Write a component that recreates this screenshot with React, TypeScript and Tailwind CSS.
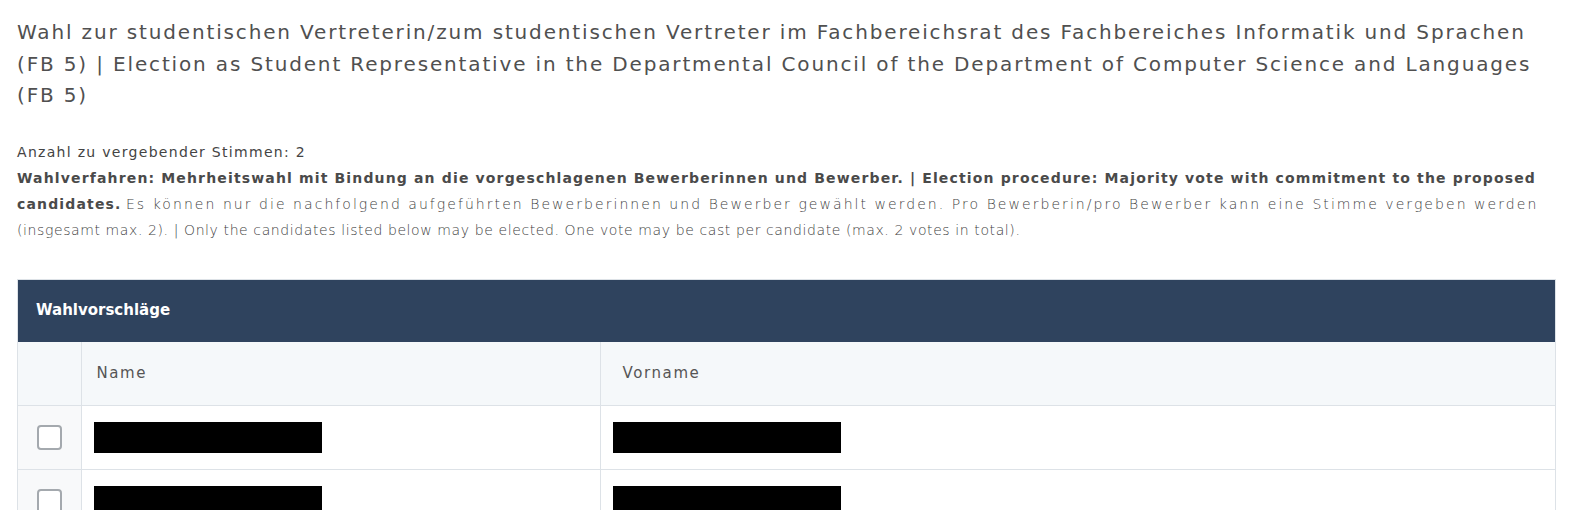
import { useState } from "react"

const candidates = [
  { id: 1, name: "", vorname: "" },
  { id: 2, name: "", vorname: "" },
]

export default function App() {
  const [selected, setSelected] = useState<number[]>([])

  function toggle(id: number) {
    if (selected.includes(id)) {
      setSelected(selected.filter((s) => s !== id))
    } else if (selected.length < 2) {
      setSelected([...selected, id])
    }
  }

  return (
    <main className="min-h-screen bg-white px-[17px] pt-[17px] font-['DejaVu_Sans',sans-serif]">
      {/* Titel der Wahl */}
      <h1 className="text-[20px] leading-[31.5px] tracking-[1.85px] text-[#505050] font-normal">
        Wahl zur studentischen Vertreterin/zum studentischen Vertreter im Fachbereichsrat des Fachbereiches Informatik und Sprachen (FB 5) | Election as Student Representative in the Departmental Council of the Department of Computer Science and Languages (FB 5)
      </h1>

      {/* Hinweise */}
      <div className="mt-[27px] text-[14px] leading-[26px] text-[#444444]">
        <p className="tracking-[1.3px]">Anzahl zu vergebender Stimmen: 2</p>
        <p>
          <span className="font-semibold tracking-[1.15px] text-[#4a4a4a]">
            Wahlverfahren: Mehrheitswahl mit Bindung an die vorgeschlagenen Bewerberinnen und Bewerber. | Election procedure: Majority vote with commitment to the proposed candidates.
          </span>{" "}
          <span className="font-light tracking-[2.05px] text-[#3f3f3f]">
            Es können nur die nachfolgend aufgeführten Bewerberinnen und Bewerber gewählt werden. Pro Bewerberin/pro Bewerber kann eine Stimme vergeben werden
          </span>
          <br />
          <span className="font-light tracking-[0.6px] text-[#3f3f3f]">
            (insgesamt max. 2). | Only the candidates listed below may be elected. One vote may be cast per candidate (max. 2 votes in total).
          </span>
        </p>
      </div>

      {/* Wahlvorschläge */}
      <div className="mt-[36px] border border-[#dde2e7]">
        <div className="bg-[#2f435e] h-[62px] flex items-center px-[18px]">
          <h2 className="text-white font-bold text-[15px]">Wahlvorschläge</h2>
        </div>
        <table className="w-full border-collapse">
          <thead>
            <tr className="bg-[#f5f8fa] h-[64px]">
              <th className="w-[63px] border-r border-b border-[#dde2e7]"></th>
              <th className="w-[519px] text-left font-normal text-[15px] tracking-[1.6px] text-[#555555] pl-[15px] border-r border-b border-[#dde2e7]">
                Name
              </th>
              <th className="text-left font-normal text-[15px] tracking-[1.6px] text-[#555555] pl-[22px] border-b border-[#dde2e7]">
                Vorname
              </th>
            </tr>
          </thead>
          <tbody>
            {candidates.map((c) => (
              <tr key={c.id} className="h-[64px]">
                <td className="bg-[#f8f9fa] border-r border-b border-[#dde2e7]">
                  <div className="flex justify-center">
                    <input
                      type="checkbox"
                      checked={selected.includes(c.id)}
                      onChange={() => toggle(c.id)}
                      className="appearance-none w-[25px] h-[25px] rounded-[4px] border-2 border-[#a4a9ae] bg-white"
                    />
                  </div>
                </td>
                <td className="pl-[12px] border-r border-b border-[#dde2e7]">
                  <div className="bg-black w-[228px] h-[31px]"></div>
                </td>
                <td className="pl-[12px] border-b border-[#dde2e7]">
                  <div className="bg-black w-[228px] h-[31px]"></div>
                </td>
              </tr>
            ))}
          </tbody>
        </table>
      </div>
    </main>
  )
}
